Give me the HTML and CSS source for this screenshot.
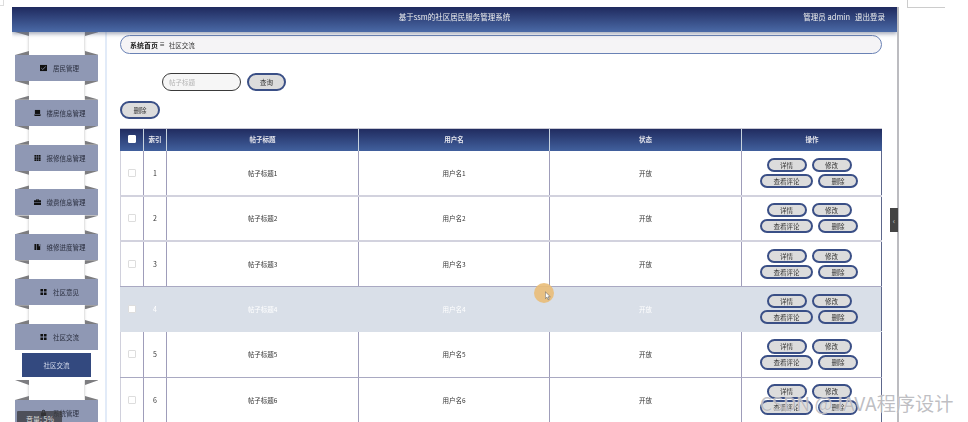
FILE: index.html
```html
<!DOCTYPE html>
<html lang="zh">
<head>
<meta charset="utf-8">
<title>社区交流</title>
<link rel="stylesheet" href="styles.css">
</head>
<body>
<div class="corner-left"></div>
<div class="corner-right"></div>
<div class="window">
  <header class="topbar">
    <div class="topbar-title">基于ssm的社区居民服务管理系统</div>
    <div class="topbar-user"><span>管理员 admin</span><span>退出登录</span></div>
  </header>
  <div class="body-wrap">
    <aside class="sidebar">
      <div class="cap"></div>
      <div class="group"><div class="menu-item">
        <svg class="ico" viewBox="0 0 8 8"><path d="M0 .5h8v7H0z"/><path d="M1.500 4.200l1.600 1.500L6.500 2.400" fill="none" stroke="#8f98b4" stroke-width=".9"/></svg>居民管理</div></div>
      <div class="strip"></div>
      <div class="group"><div class="menu-item">
        <svg class="ico" viewBox="0 0 8 8"><path d="M1 .5h6v4.600H1z"/><path d="M0 5.800h8L7.200 7.500H.8z"/></svg>楼房信息管理</div></div>
      <div class="strip"></div>
      <div class="group"><div class="menu-item">
        <svg class="ico" viewBox="0 0 8 8"><path d="M.5 .5h2v2h-2zM3 .5h2v2H3zM5.500 .5h2v2h-2zM.5 3h2v2h-2zM3 3h2v2H3zM5.500 3h2v2h-2zM.5 5.500h2v2h-2zM3 5.500h2v2H3zM5.500 5.500h2v2h-2z"/></svg>报修信息管理</div></div>
      <div class="strip"></div>
      <div class="group"><div class="menu-item">
        <svg class="ico" viewBox="0 0 8 8"><path d="M2.500 2V.8h3V2H8v2.300H0V2zM3.300 2h1.400v-.5H3.300zM0 4.800h8v2.700H0z"/></svg>缴费信息管理</div></div>
      <div class="strip"></div>
      <div class="group"><div class="menu-item">
        <svg class="ico" viewBox="0 0 8 8"><path d="M.5 .5h2.200v7H.5zM3.400 .5h1.400v7H3.400zM4.800 .5h.6v3l.6-.7.600.7v-3h.500v7H4.800z"/></svg>维修进度管理</div></div>
      <div class="strip"></div>
      <div class="group"><div class="menu-item">
        <svg class="ico" viewBox="0 0 8 8"><path d="M.5 .5h3v3h-3zM4.500 .5h3v3h-3zM.5 4.500h3v3h-3zM4.500 4.500h3v3h-3z"/></svg>社区意见</div></div>
      <div class="strip"></div>
      <div class="group group-open"><div class="menu-item">
        <svg class="ico" viewBox="0 0 8 8"><path d="M.5 .5h3v3h-3zM4.500 .5h3v3h-3zM.5 4.500h3v3h-3zM4.500 4.500h3v3h-3z"/></svg>社区交流</div>
        <div class="submenu">社区交流</div></div>
      <div class="strip"></div>
      <div class="group"><div class="menu-item">
        <svg class="ico" viewBox="0 0 8 8"><path d="M2.200 3.500V2.200a1.800 1.800 0 013.600 0v1.300H7v4.200H1V3.500zM3 3.500h2V2.200a1 1 0 00-2 0z"/></svg>系统管理</div></div>
    </aside>
    <main class="content">
      <nav class="crumb"><b>系统首页</b><span class="crumb-sep">≡</span><span>社区交流</span></nav>
      <div class="search">
        <div class="search-input">帖子标题</div>
        <button class="btn btn-big">查询</button>
      </div>
      <div class="bulk"><button class="btn btn-big">删除</button></div>
      <div class="table">
        <div class="row head">
          <div class="cell"><span class="check check-on"></span></div>
          <div class="cell">索引</div>
          <div class="cell">帖子标题</div>
          <div class="cell">用户名</div>
          <div class="cell">状态</div>
          <div class="cell">操作</div>
        </div>
        <div class="row row-thick">
          <div class="cell"><span class="check"></span></div>
          <div class="cell num">1</div>
          <div class="cell">帖子标题1</div>
          <div class="cell">用户名1</div>
          <div class="cell">开放</div>
          <div class="cell actions"><button class="btn">详情</button><button class="btn">修改</button><button class="btn">查看评论</button><button class="btn">删除</button></div>
        </div>
        <div class="row row-thick">
          <div class="cell"><span class="check"></span></div>
          <div class="cell num">2</div>
          <div class="cell">帖子标题2</div>
          <div class="cell">用户名2</div>
          <div class="cell">开放</div>
          <div class="cell actions"><button class="btn">详情</button><button class="btn">修改</button><button class="btn">查看评论</button><button class="btn">删除</button></div>
        </div>
        <div class="row">
          <div class="cell"><span class="check"></span></div>
          <div class="cell num">3</div>
          <div class="cell">帖子标题3</div>
          <div class="cell">用户名3</div>
          <div class="cell">开放</div>
          <div class="cell actions"><button class="btn">详情</button><button class="btn">修改</button><button class="btn">查看评论</button><button class="btn">删除</button></div>
        </div>
        <div class="row row-hover">
          <div class="cell"><span class="check"></span></div>
          <div class="cell num">4</div>
          <div class="cell">帖子标题4</div>
          <div class="cell">用户名4</div>
          <div class="cell">开放</div>
          <div class="cell actions"><button class="btn">详情</button><button class="btn">修改</button><button class="btn">查看评论</button><button class="btn">删除</button></div>
        </div>
        <div class="row">
          <div class="cell"><span class="check"></span></div>
          <div class="cell num">5</div>
          <div class="cell">帖子标题5</div>
          <div class="cell">用户名5</div>
          <div class="cell">开放</div>
          <div class="cell actions"><button class="btn">详情</button><button class="btn">修改</button><button class="btn">查看评论</button><button class="btn">删除</button></div>
        </div>
        <div class="row">
          <div class="cell"><span class="check"></span></div>
          <div class="cell num">6</div>
          <div class="cell">帖子标题6</div>
          <div class="cell">用户名6</div>
          <div class="cell">开放</div>
          <div class="cell actions"><button class="btn">详情</button><button class="btn">修改</button><button class="btn">查看评论</button><button class="btn">删除</button></div>
        </div>
      </div>
    </main>
  </div>
</div>
<div class="side-handle">‹</div>
<div class="click-halo"></div>
<svg class="pointer" viewBox="0 0 8 12"><path d="M.5 .5v9l2.200-2 1.500 3.500 1.400-.6-1.500-3.400h3z" fill="#fff" stroke="#555" stroke-width=".7"/></svg>
<div class="volume">音量: 5%</div>
<div class="watermark">CSDN @JAVA程序设计</div>
</body>
</html>
```
FILE: styles.css
```css
* { box-sizing: border-box; }
html, body { margin: 0; height: 422px; overflow: hidden; background: #fff; }
body { font-family: "Noto Sans CJK SC", "Liberation Sans", sans-serif; font-size: 6.500px; color: #333; position: relative; }

.corner-left { position: absolute; left: 0; top: 0; width: 4px; height: 6px; border: solid #ddd; border-width: 0 1px 1px 0; }
.corner-right { position: absolute; left: 907px; top: 0; width: 38px; height: 8px; border: solid #ccc; border-width: 0 0 1px 1px; }

.window { margin: 7px 0 0 12px; width: 887px; height: 415px; border-right: 2px solid #bcbcc0; filter: blur(.45px); overflow: hidden; }

.topbar { height: 25px; display: flex; align-items: center; position: relative; background: linear-gradient(#1f2a5e, #4a69a6); box-shadow: 0 2px 4px rgba(90, 100, 130, .55); color: #eee; z-index: 2; padding-bottom: 6px; }
.topbar-title { flex: 1; text-align: center; font-size: 7.500px; }
.topbar-user { position: absolute; right: 12px; top: 4px; display: flex; gap: 5px; font-size: 7.500px; }

.body-wrap { display: flex; height: 390px; }

.sidebar { width: 95px; flex: none; padding: 0 7px 0 3px; border-right: 2px solid #e2ebf8; display: flex; flex-direction: column; }
.cap { height: 23px; flex: none; margin: 0 14px; box-shadow: 0 0 3px #bbb; position: relative; background: #fff; }
.cap::before { content: ""; position: absolute; left: -14px; right: -14px; top: 0; height: 4px; background: #7d7d80; clip-path: polygon(0 0, 14px 0, 14px 100%, 70px 100%, 70px 0, 84px 0, 70px 100%, 14px 100%); }

.group { position: relative; flex: none; background: #fff; }
.group::before, .group::after { content: ""; position: absolute; left: 0; right: 0; height: 4px; background: #7d7d80; clip-path: polygon(0 0, 14px 0, 14px 100%, 70px 100%, 70px 0, 84px 0, 70px 100%, 14px 100%); }
.group::before { top: -4px; clip-path: polygon(0 100%, 14px 0, 14px 100%, 70px 100%, 70px 0, 84px 100%); }
.group::after { bottom: -4px; }
.group-open { padding-bottom: 3px; }
.group-open::after { height: 5px; bottom: -5px; }

.menu-item { height: 26px; display: flex; align-items: center; justify-content: center; gap: 6px; background: #8f98b4; color: #2b2f3f; font-size: 6.500px; padding-left: 6px; }
.ico { width: 7px; height: 8px; fill: #111; flex: none; }

.submenu { height: 24px; margin: 3px 7px 0; background: #33497f; color: #d6dcec; display: flex; align-items: center; justify-content: center; }
.strip { height: 18.830px; flex: none; margin: 0 14px; background: #fff; box-shadow: 0 0 3px #bbb; }
.group-open + .strip { height: 20px; }

.content { flex: 1; min-width: 0; padding: 3px 15px 0 13px; }

.crumb { height: 19px; border: 1px solid #6a82b5; border-radius: 10px; background: #f5f4f6; display: flex; align-items: center; gap: 2px; padding-left: 9px; color: #333; }
.crumb b { color: #222; font-size: 7px; }
.crumb-sep { font-family: "Liberation Sans", sans-serif; font-size: 8px; margin-right: 2px; }

.search { display: flex; gap: 6px; margin: 19px 0 0 42px; }
.search-input { width: 79px; height: 18px; border: 1.500px solid #3a3a3a; border-radius: 10px; background: #f6f6f6; color: #b4b4b4; padding: 0 0 0 6px; display: flex; align-items: center; }
.bulk { margin-top: 10px; display: flex; }

.btn { font: inherit; font-size: 6.500px; color: #333; background: #dcdcdc; border: 2px solid #3a4f86; border-radius: 9px; padding: 0; height: 14.500px; width: 40px; display: flex; align-items: center; justify-content: center; line-height: 1; }
.btn-big { width: 40px; height: 18px; border-radius: 10px; }
.btn:nth-child(3) { width: 53px; }
.search .btn:nth-child(2) { width: 39px; }

.table { margin-top: 9px; width: 762px; }
.row { display: grid; grid-template-columns: 24px 23px 192px 191px 192px 140px; height: 45.250px; border-bottom: 1px solid #a9a9c2; text-align: center; }
.row-thick { border-bottom: 2px solid #d2d2de; }
.cell { display: flex; align-items: center; justify-content: center; border-right: 1px solid #9f9dba; font-size: 6.500px; color: #333; }
.cell:first-child { border-left: 1px solid #d0d0dc; }
.cell:last-child { border-right: 1px solid #5d678c; }
.num { font-size: 7px; }

.head { height: 23.250px; background: linear-gradient(#212c60, #41609d); border: 0; border-top: 1px solid #c8c8d4; }
.head .cell { color: #e8e8ee; border-right: 1px solid #c7d3de; border-left: 0; font-weight: 700; padding-bottom: 2px; }
.head .cell:last-child { border-right: 0; }

.row-hover { background: #d9dfe8; border-bottom-color: #d9dfe8; }
.row-hover .cell { color: #fff; border-color: #d9dfe8; }
.row-hover .cell:last-child { border-right-color: #5d678c; }

.check { width: 8px; height: 8px; border: 1px solid #ddd; border-radius: 1px; background: #fff; }
.check-on { background: #fff; border-color: #fff; }

.actions { flex-wrap: wrap; align-content: center; gap: 1.500px 5px; padding-right: 5px; }

.side-handle { position: absolute; left: 890px; top: 208px; width: 8px; height: 24px; background: #444; color: #ccc; font-size: 8px; display: flex; align-items: center; justify-content: center; }
.click-halo { position: absolute; left: 534px; top: 283px; width: 20px; height: 20px; border-radius: 50%; background: #e9bc78; opacity: .9; }
.pointer { position: absolute; left: 545px; top: 291px; width: 6px; height: 10px; }
.volume { position: absolute; left: 17px; top: 411px; width: 45px; height: 11px; background: rgba(60, 60, 64, .78); color: #ddd; font-size: 7px; padding: 3px 0 0 9px; line-height: 10px; border-radius: 1px 1px 0 0; }
.watermark { position: absolute; left: 760px; top: 390px; font-size: 19.200px; line-height: 26px; white-space: nowrap; color: rgba(170, 170, 175, .75); text-shadow: 0 0 1px rgba(255, 255, 255, .9); }
```
